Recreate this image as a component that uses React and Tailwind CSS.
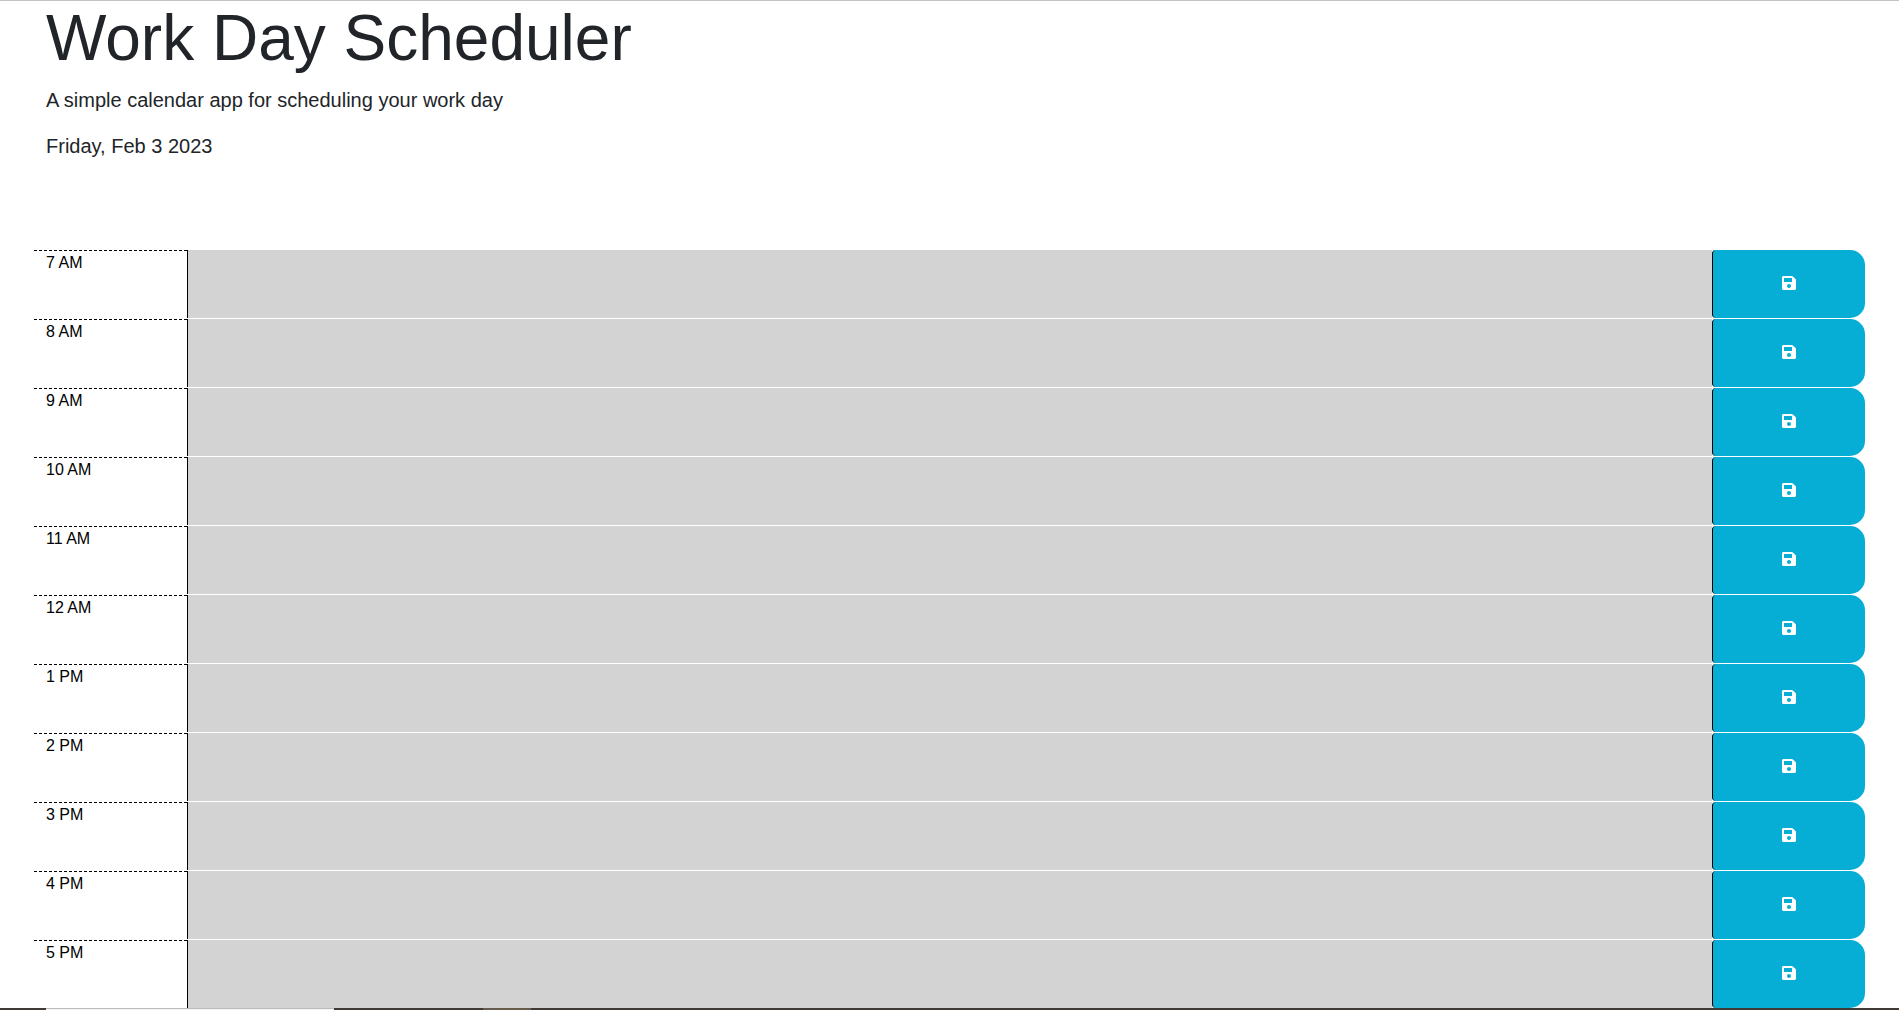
import React from "react";
import { FaSave } from "react-icons/fa";

const hours = [
  "7 AM",
  "8 AM",
  "9 AM",
  "10 AM",
  "11 AM",
  "12 AM",
  "1 PM",
  "2 PM",
  "3 PM",
  "4 PM",
  "5 PM",
];

function TimeBlock({ hour }) {
  const id = "block-" + hour.replace(" ", "-").toLowerCase();
  return (
    <div className="grid h-[68px] grid-cols-12">
      <label
        htmlFor={id}
        className="border-t border-dashed border-black px-3 text-base text-black"
      >
        {hour}
      </label>
      <textarea
        id={id}
        className="col-span-10 block h-full w-full resize-none border-l border-black bg-[#d3d3d3] px-3 text-base text-black outline-none"
      />
      <button
        type="button"
        aria-label={"Save " + hour}
        className="flex items-center justify-center rounded-l-[4px] rounded-r-[15px] border-l border-black bg-[#06aed5] pb-0.5 text-base text-white"
      >
        <FaSave className="h-4 w-auto" />
      </button>
    </div>
  );
}

export default function App() {
  return (
    <div className="flex min-h-screen flex-col bg-white font-['Liberation_Sans',Arial,sans-serif] text-[#212529]">
      <header className="border-t border-[#c3c3c3] px-[46px] pb-[89px]">
        <h1 className="mb-2.5 text-[64px] leading-[74px]">
          Work Day Scheduler
        </h1>
        <p className="mb-4 text-[20px] leading-[30px]">
          A simple calendar app for scheduling your work day
        </p>
        <p className="text-[20px] leading-[30px]">Friday, Feb 3 2023</p>
      </header>
      <main className="flex flex-col gap-px px-[34px]">
        {hours.map((hour) => (
          <TimeBlock key={hour} hour={hour} />
        ))}
      </main>
      <footer className="mt-auto flex h-[2px] bg-[#3f3a35]">
        <div className="ml-[46px] w-[288px] border-t border-[#bdbdbd] bg-[#f3f3f3]" />
        <div className="ml-[149px] w-12 bg-[#655c4b]" />
      </footer>
    </div>
  );
}
